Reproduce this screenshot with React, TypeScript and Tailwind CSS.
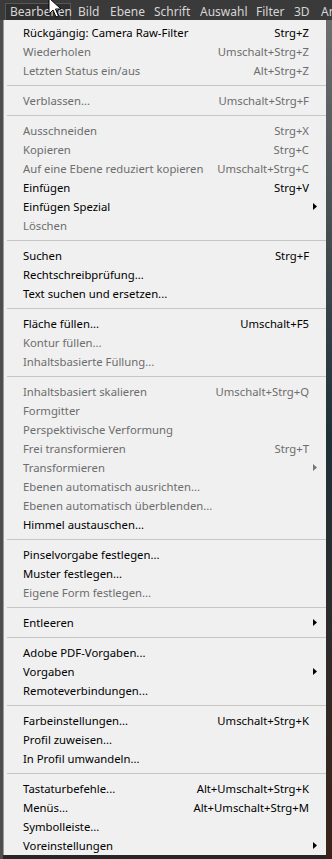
import React from "react";

type Item =
  | { sep: true }
  | { sep?: false; label: string; sc?: string; dis?: boolean; sub?: boolean };

const S: Item = { sep: true };

const items: Item[] = [
  { label: "Rückgängig: Camera Raw-Filter", sc: "Strg+Z" },
  { label: "Wiederholen", sc: "Umschalt+Strg+Z", dis: true },
  { label: "Letzten Status ein/aus", sc: "Alt+Strg+Z", dis: true },
  S,
  { label: "Verblassen...", sc: "Umschalt+Strg+F", dis: true },
  S,
  { label: "Ausschneiden", sc: "Strg+X", dis: true },
  { label: "Kopieren", sc: "Strg+C", dis: true },
  { label: "Auf eine Ebene reduziert kopieren", sc: "Umschalt+Strg+C", dis: true },
  { label: "Einfügen", sc: "Strg+V" },
  { label: "Einfügen Spezial", sub: true },
  { label: "Löschen", dis: true },
  S,
  { label: "Suchen", sc: "Strg+F" },
  { label: "Rechtschreibprüfung..." },
  { label: "Text suchen und ersetzen..." },
  S,
  { label: "Fläche füllen...", sc: "Umschalt+F5" },
  { label: "Kontur füllen...", dis: true },
  { label: "Inhaltsbasierte Füllung...", dis: true },
  S,
  { label: "Inhaltsbasiert skalieren", sc: "Umschalt+Strg+Q", dis: true },
  { label: "Formgitter", dis: true },
  { label: "Perspektivische Verformung", dis: true },
  { label: "Frei transformieren", sc: "Strg+T", dis: true },
  { label: "Transformieren", dis: true, sub: true },
  { label: "Ebenen automatisch ausrichten...", dis: true },
  { label: "Ebenen automatisch überblenden...", dis: true },
  { label: "Himmel austauschen..." },
  S,
  { label: "Pinselvorgabe festlegen..." },
  { label: "Muster festlegen..." },
  { label: "Eigene Form festlegen...", dis: true },
  S,
  { label: "Entleeren", sub: true },
  S,
  { label: "Adobe PDF-Vorgaben..." },
  { label: "Vorgaben", sub: true },
  { label: "Remoteverbindungen..." },
  S,
  { label: "Farbeinstellungen...", sc: "Umschalt+Strg+K" },
  { label: "Profil zuweisen..." },
  { label: "In Profil umwandeln..." },
  S,
  { label: "Tastaturbefehle...", sc: "Alt+Umschalt+Strg+K" },
  { label: "Menüs...", sc: "Alt+Umschalt+Strg+M" },
  { label: "Symbolleiste..." },
  { label: "Voreinstellungen", sub: true },
];

function Arrow({ dis }: { dis?: boolean }) {
  return (
    <svg width="4" height="7" viewBox="0 0 4 7" className="absolute right-[9px] top-[6px]">
      <path d="M0 0 L4 3.5 L0 7 Z" fill={dis ? "#777777" : "#000000"} />
    </svg>
  );
}

export default function App() {
  return (
    <div className="relative w-[332px] h-[859px] overflow-hidden bg-[#262626] font-['Noto_Sans',sans-serif]">
      {/* menu bar */}
      <div className="h-[20px] bg-[#3a3a3a] flex items-end text-[12px] text-[#d6d6d6] whitespace-nowrap overflow-hidden">
        <div className="ml-[5px] h-[17px] w-[66px] pl-[4px] flex items-center bg-[#2f2f2f] border border-[#575757] border-b-0 shrink-0">
          Bearbeiten
        </div>
        <div className="flex h-[17px] items-center shrink-0">
          <span className="ml-[7px] w-[32px]">Bild</span>
          <span className="w-[44px]">Ebene</span>
          <span className="w-[46px]">Schrift</span>
          <span className="w-[56px]">Auswahl</span>
          <span className="w-[38px]">Filter</span>
          <span className="w-[27px]">3D</span>
          <span>An</span>
        </div>
      </div>
      {/* body */}
      <div className="flex h-[839px]">
        <div className="w-[3px] bg-[#4e4e4e]" />
        <div className="w-[323px] flex flex-col">
          <div className="bg-[#f0f0f0] border-l border-[#9a9a9a] pt-[3px] text-[11.3px] leading-none">
            {items.map((it, i) =>
              it.sep ? (
                <div key={i} className="h-[11px] flex items-center pl-[3px]">
                  <div className="h-px w-full bg-[#c6c6c6]" />
                </div>
              ) : (
                <div
                  key={i}
                  className={
                    "relative h-[19px] flex items-center pl-[19px] pr-[17px] whitespace-nowrap " +
                    (it.dis ? "text-[#6d6d6d]" : "text-[#000000]")
                  }
                >
                  <span className="flex-1">{it.label}</span>
                  {it.sc && <span>{it.sc}</span>}
                  {it.sub && <Arrow dis={it.dis} />}
                </div>
              )
            )}
          </div>
          <div className="flex-1 bg-[#262626]" />
        </div>
        <div className="flex-1 bg-gradient-to-b from-[#6e6e6e] via-[#1d3038] to-[#3a2319]" />
      </div>
      {/* mouse cursor */}
      <svg width="14" height="22" viewBox="0 0 14 22" className="absolute left-[48px] top-[-3px]">
        <path d="M1 1 L1 17 L5 13 L8 20 L10.5 19 L7.5 12 L13 12 Z" fill="#ffffff" stroke="#000000" strokeWidth="1" />
      </svg>
    </div>
  );
}
